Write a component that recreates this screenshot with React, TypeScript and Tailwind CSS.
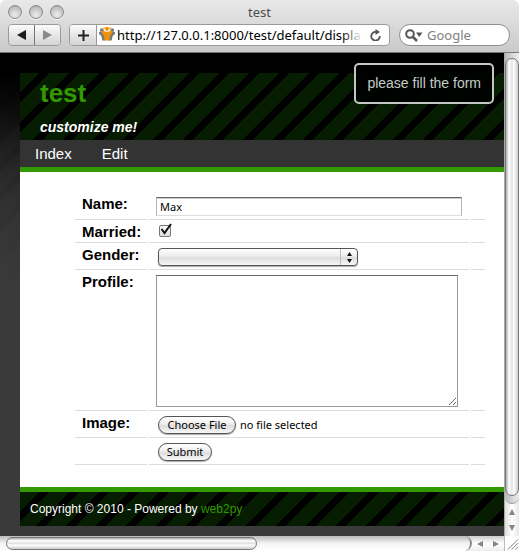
import React, { useRef, useState } from "react";

const pageFont = "font-['Liberation_Sans',Arial,sans-serif]";
const systemFont = "font-['Noto_Sans','Open_Sans',sans-serif]";
const stripes =
  "bg-[linear-gradient(135deg,#061d02_33%,#000_33%,#000_50%,#061d02_50%,#061d02_83%,#000_83%)] bg-[length:30px_30px]";
const aqua =
  "border border-[#555] bg-[linear-gradient(#fff,#ededed_45%,#dcdcdc_55%,#f8f8f8)] shadow-[0_1px_1px_#aaa]";
const toolbarButton =
  "flex h-full items-center justify-center bg-gradient-to-b from-[#fbfbfb] to-[#d4d4d4]";

function TrafficLight({ label }: { label: string }) {
  return (
    <button
      type="button"
      aria-label={label}
      className="size-3.5 rounded-full border border-[#8a8a8a] bg-[radial-gradient(circle_at_50%_75%,#eee,#c9c9c9_55%,#a2a2a2)] shadow-[0_1px_0_#f4f4f4]"
    />
  );
}

function Toolbar() {
  return (
    <header
      className={`${systemFont} rounded-t-md border-b border-[#777] bg-gradient-to-b from-[#e9e9e9] to-[#c9c9c9]`}
    >
      <div className="grid h-6 grid-cols-[1fr_auto_1fr] items-center px-2">
        <div className="flex gap-[7px]">
          <TrafficLight label="Close" />
          <TrafficLight label="Minimize" />
          <TrafficLight label="Zoom" />
        </div>
        <h1 className="text-[13px] leading-4 text-[#4c4c4c]">test</h1>
      </div>
      <div className="flex h-7 items-start px-2">
        <div className="mr-2 flex h-[22px] w-[53px] shrink-0 overflow-hidden rounded border border-[#9a9a9a]">
          <button type="button" aria-label="Back" className={`${toolbarButton} w-[26px] border-r border-[#777]`}>
            <svg width="9" height="10" viewBox="0 0 9 10"><path d="M0 5 9 0v10z" fill="#1c1c1c" /></svg>
          </button>
          <button type="button" aria-label="Forward" className={`${toolbarButton} flex-1`}>
            <svg width="9" height="10" viewBox="0 0 9 10"><path d="M9 5 0 0v10z" fill="#8a8a8a" /></svg>
          </button>
        </div>
        <div className="mr-[9px] flex h-[22px] flex-1 overflow-hidden rounded border border-[#9a9a9a] bg-white">
          <button type="button" aria-label="Add bookmark" className={`${toolbarButton} w-[27px] shrink-0 border-r border-[#999]`}>
            <svg width="11" height="11" viewBox="0 0 11 11"><path d="M5.5 0v11M0 5.5h11" stroke="#222" strokeWidth="2" /></svg>
          </button>
          <svg className="mt-px ml-0.5 shrink-0" width="16" height="16" viewBox="0 0 17 16">
            <g fill="#777b7e">
              <circle cx="3" cy="4" r="2" />
              <circle cx="14" cy="4" r="2" />
              <path d="M0 6h5l2 4v5H3.500L2.500 10 0 8zM17 6h-5l-2 4v5h3.500l1-5 2.500-2z" />
            </g>
            <g fill="#f39208">
              <circle cx="8.5" cy="2.5" r="2.2" />
              <path d="M3.5 4 7 5.500h3L13.500 4l1 2-3 4-.5 5H6l-.5-5-3-4z" />
            </g>
            <circle cx="5.500" cy="1.800" r="1.200" fill="#f9bc60" />
            <circle cx="11.500" cy="1.800" r="1.200" fill="#f9bc60" />
          </svg>
          <div className="relative flex min-w-0 flex-1">
            <input
              aria-label="Address"
              defaultValue="http://127.0.0.1:8000/test/default/display_form"
              className="w-full min-w-0 bg-transparent pl-0.5 text-[13px] leading-5 text-black outline-none"
            />
            <span className="pointer-events-none absolute inset-y-0 right-0 w-5 bg-gradient-to-r from-transparent to-white" />
          </div>
          <button type="button" aria-label="Reload" className="flex w-[27px] shrink-0 items-center justify-center">
            <svg width="11" height="12" viewBox="0 0 11 12">
              <path d="M9.800 7A4.300 4.300 0 1 1 6 3" fill="none" stroke="#555" strokeWidth="1.800" />
              <path d="M5.500 0 10 3 5.500 6z" fill="#555" />
            </svg>
          </button>
        </div>
        <div className="mr-[1px] flex h-[22px] w-[111px] shrink-0 items-center rounded-full border border-[#8f8f8f] bg-white pl-[5px]">
          <svg className="shrink-0" width="18" height="13" viewBox="0 0 18 13">
            <circle cx="5" cy="5" r="3.800" fill="none" stroke="#555" strokeWidth="2" />
            <path d="m8 8 4 4" stroke="#555" strokeWidth="2.500" />
            <path d="M11 3.500h6.500L14.200 8z" fill="#555" />
          </svg>
          <input
            aria-label="Search"
            placeholder="Google"
            className="ml-1 w-full min-w-0 bg-transparent text-[13px] leading-4 outline-none placeholder:text-[#808080]"
          />
        </div>
      </div>
    </header>
  );
}

function Row({
  id,
  label,
  height,
  children,
}: {
  id?: string;
  label?: string;
  height: string;
  children: React.ReactNode;
}) {
  const line = "border-b border-[#dcdcdc] p-0 align-top";
  return (
    <tr className={height}>
      <td className={`${line} pt-[3px] pl-[7px] text-[15px] leading-[18px] font-bold text-black`}>
        {label && <label htmlFor={id}>{label}</label>}
      </td>
      <td className={`${line} pl-[7px]`}>{children}</td>
      <td className={line} />
    </tr>
  );
}

function Form() {
  const fileRef = useRef<HTMLInputElement>(null);
  const [married, setMarried] = useState(true);
  return (
    <form className="pt-5 pr-[17px] pb-[22px] pl-[53px]" onSubmit={(e) => e.preventDefault()}>
      <table className="w-full table-fixed border-separate border-spacing-x-0.5 border-spacing-y-0">
        <colgroup>
          <col className="w-[72px]" />
          <col />
          <col className="w-3.5" />
        </colgroup>
        <tbody>
          <Row id="name" label="Name:" height="h-7">
            <input
              id="name"
              defaultValue="Max"
              className={`${systemFont} mt-[5px] block h-[19px] w-[306px] border border-[#b5b5b5] border-t-[#666] border-b-[#ddd] px-[3px] text-[11px] leading-4 text-black shadow-[inset_0_1px_0_#ccc] outline-none`}
            />
          </Row>
          <Row id="married" label="Married:" height="h-[23px]">
            <span className="relative mt-[5px] ml-[3px] flex size-3">
              <input
                id="married"
                type="checkbox"
                checked={married}
                onChange={(e) => setMarried(e.target.checked)}
                className="size-3 appearance-none rounded-[2px] border border-[#777] bg-gradient-to-b from-white to-[#ddd]"
              />
              {married && (
                <svg className="pointer-events-none absolute -top-0.5 left-0" width="14" height="13" viewBox="0 0 14 13">
                  <path d="M2.500 6 5.500 10 12 1" fill="none" stroke="#111" strokeWidth="2" />
                </svg>
              )}
            </span>
          </Row>
          <Row id="gender" label="Gender:" height="h-[27px]">
            <span className="relative mt-[5px] ml-0.5 flex h-[18px] w-[200px]">
              <select id="gender" defaultValue="" className={`${aqua} h-full w-full appearance-none rounded`}>
                <option value=""></option>
                <option value="male">male</option>
                <option value="female">female</option>
              </select>
              <span className="pointer-events-none absolute inset-y-px right-0 flex w-[18px] items-center justify-center border-l border-[#bbb]">
                <svg width="5" height="11" viewBox="0 0 5 11"><path d="M0 4 2.500 0 5 4zM0 7l2.500 4L5 7z" fill="#111" /></svg>
              </span>
            </span>
          </Row>
          <Row id="profile" label="Profile:" height="h-[141px]">
            <textarea id="profile" className="mt-[5px] block h-[132px] w-[302px] border border-[#999] border-t-[#666] bg-white outline-none" />
          </Row>
          <Row id="image" label="Image:" height="h-[27px]">
            <div className={`${systemFont} mt-[5px] ml-0.5 flex items-center gap-1 text-[11px] text-black`}>
              <button type="button" onClick={() => fileRef.current?.click()} className={`${aqua} h-[18px] w-[78px] rounded-full leading-4`}>
                Choose File
              </button>
              <input ref={fileRef} id="image" type="file" className="hidden" />
              <span className="leading-4">no file selected</span>
            </div>
          </Row>
          <Row height="h-[27px]">
            <button type="submit" className={`${systemFont} ${aqua} mt-[5px] ml-0.5 block h-[18px] w-[54px] rounded-full text-[11px] leading-4 text-black`}>
              Submit
            </button>
          </Row>
        </tbody>
      </table>
    </form>
  );
}

function Page() {
  return (
    <div
      className={`${pageFont} relative flex min-w-0 flex-1 flex-col bg-[#3a3a3a] bg-[linear-gradient(transparent_60px,#3a3a3a_250px),repeating-linear-gradient(135deg,transparent_0_14px,#00000026_14px_21px),linear-gradient(#000_20px,#242424_130px,#3a3a3a_250px)] bg-[length:100%_250px] bg-no-repeat pt-5 pb-2.5 pl-5`}
    >
      <div role="status" className="absolute top-2.5 right-2.5 rounded-[5px] border-2 border-[#c4c8c4] bg-black/85 px-[11px] py-[9px] text-[14px] leading-[19px] text-[#c4cbc6]">
        please fill the form
      </div>
      <div className={`${stripes} flex h-[67px] flex-col justify-between px-5 pt-1 pb-1`}>
        <h2 className="text-[26px] leading-8 font-bold text-[#339900]">test</h2>
        <p className="text-[14px] leading-[18px] font-bold text-white italic">customize me!</p>
      </div>
      <nav className="flex gap-[30px] border-b-[5px] border-[#339900] bg-[#333] px-[15px] text-[15px] leading-[27px] text-white">
        <a href="#index">Index</a>
        <a href="#edit">Edit</a>
      </nav>
      <main className="flex-1 bg-white">
        <Form />
      </main>
      <footer className={`${stripes} border-t-[5px] border-[#339900] px-2.5 text-[12px] leading-[34px] text-white`}>
        Copyright © 2010 - Powered by{" "}
        <a href="#web2py" className="text-[#339900]">web2py</a>
      </footer>
    </div>
  );
}

function Arrow({ label, d }: { label: string; d: string }) {
  return (
    <button type="button" aria-label={label} className="flex size-4 max-h-full max-w-full shrink-0 items-center justify-center">
      <svg width="8" height="8" viewBox="0 0 8 8"><path d={d} fill="#858585" /></svg>
    </button>
  );
}

export default function App() {
  return (
    <div className="flex min-h-screen flex-col bg-white">
      <Toolbar />
      <div className="flex flex-1">
        <Page />
        <div className="flex w-[15px] shrink-0 flex-col items-center border-l border-[#aaa] bg-gradient-to-r from-[#ddd] via-white to-[#e8e8e8]">
          <div className="flex w-full flex-1 flex-col rounded-b-lg border-b border-[#999] bg-gradient-to-r from-[#bbb] to-[#eee] pt-[5px] pb-[7px]">
            <div className="w-full flex-1 rounded-full border border-[#777] bg-[linear-gradient(90deg,#aaa,#fff_25%,#e2e2e2_50%,#fff_65%,#ccc)]" />
          </div>
          <Arrow label="Scroll up" d="M1 7h6L4 1z" />
          <Arrow label="Scroll down" d="M1 1h6L4 7z" />
        </div>
      </div>
      <div className="flex h-[15px] shrink-0 bg-gradient-to-b from-[#ccc] via-white to-[#eee]">
        <div className="flex flex-1 overflow-hidden rounded-r-full border-r-2 border-[#888] bg-gradient-to-b from-[#bbb] via-[#f4f4f4] to-white pt-px pl-1.5">
          <div className="h-[13px] w-[54%] rounded-full border border-[#777] bg-[linear-gradient(#aaa,#fff_25%,#e2e2e2_50%,#fff_65%,#ccc)]" />
        </div>
        <Arrow label="Scroll left" d="M7 1v6L1 4z" />
        <Arrow label="Scroll right" d="M1 1v6l6-3z" />
        <svg className="shrink-0 border-l border-[#bbb] bg-white" width="15" height="15" viewBox="0 0 15 15">
          <path d="M3 14 14 3M7 14l7-7M11 14l3-3" stroke="#777" strokeWidth="1" />
        </svg>
      </div>
    </div>
  );
}
